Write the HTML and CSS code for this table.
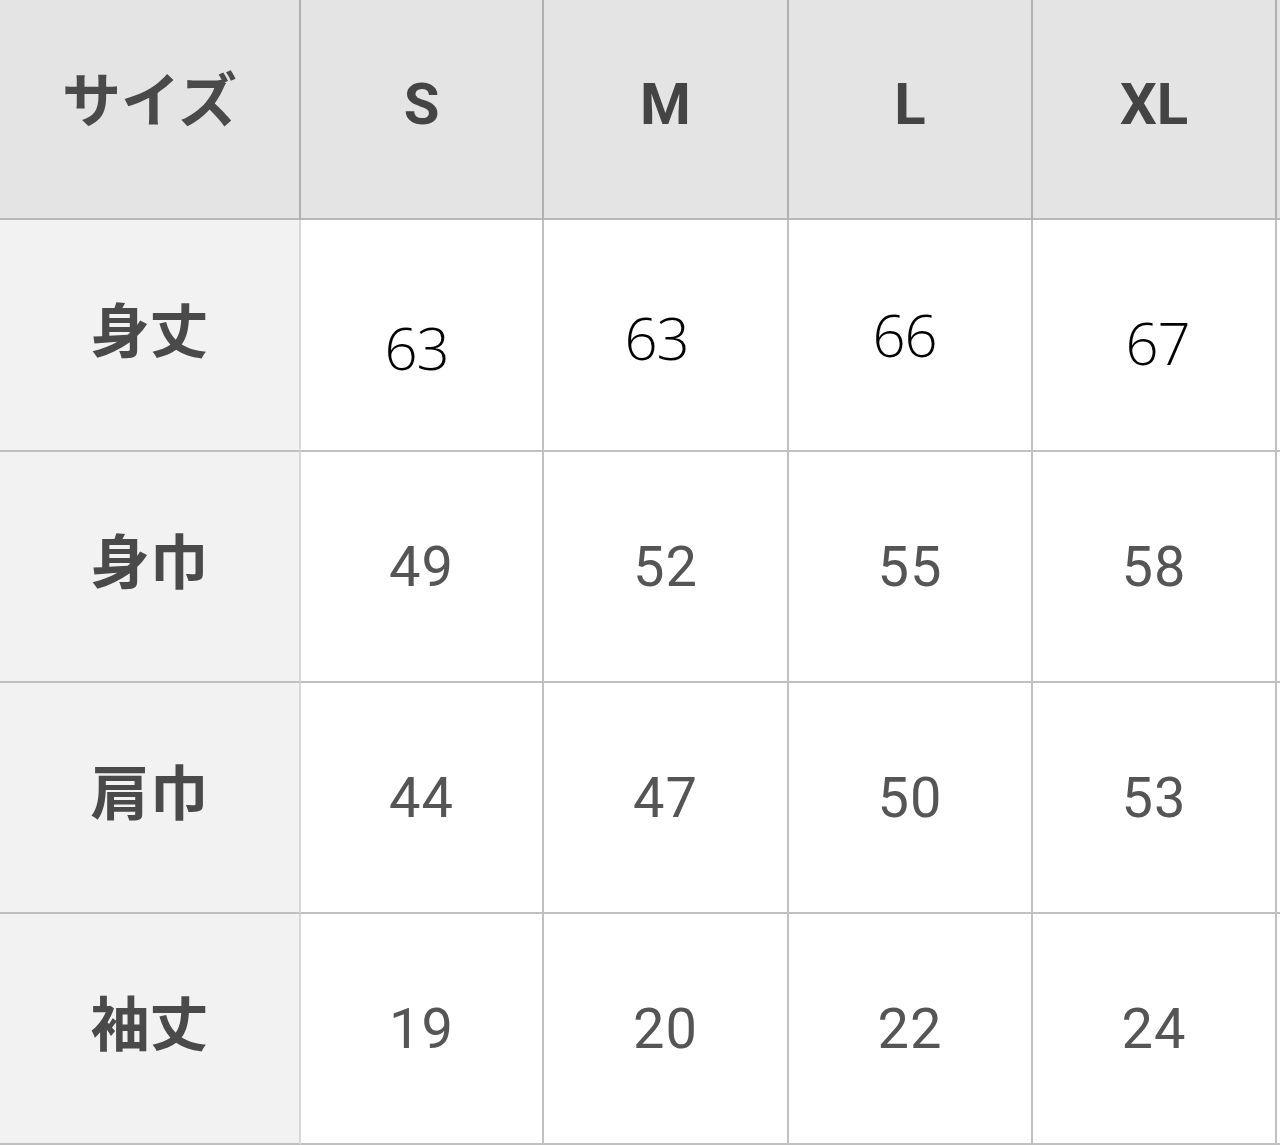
FILE: index.html
```html
<!DOCTYPE html>
<html lang="ja">
<head>
<meta charset="utf-8">
<title>サイズ表</title>
<link rel="stylesheet" href="styles.css">
</head>
<body>
<div class="chart">
  <div class="cell head label"><span class="jp hlab">サイズ</span></div>
  <div class="cell head"><span class="size">S</span></div>
  <div class="cell head"><span class="size">M</span></div>
  <div class="cell head"><span class="size">L</span></div>
  <div class="cell head"><span class="size">XL</span></div>
  <div class="cell head edge"></div>

  <div class="cell label"><span class="jp lab">身丈</span></div>
  <div class="cell"><span class="alt a1">63</span></div>
  <div class="cell"><span class="alt a2">63</span></div>
  <div class="cell"><span class="alt a3">66</span></div>
  <div class="cell"><span class="alt a4">67</span></div>
  <div class="cell edge"></div>

  <div class="cell label"><span class="jp lab">身巾</span></div>
  <div class="cell"><span class="num">49</span></div>
  <div class="cell"><span class="num">52</span></div>
  <div class="cell"><span class="num">55</span></div>
  <div class="cell"><span class="num">58</span></div>
  <div class="cell edge"></div>

  <div class="cell label"><span class="jp lab">肩巾</span></div>
  <div class="cell"><span class="num">44</span></div>
  <div class="cell"><span class="num">47</span></div>
  <div class="cell"><span class="num">50</span></div>
  <div class="cell"><span class="num">53</span></div>
  <div class="cell edge"></div>

  <div class="cell label"><span class="jp lab">袖丈</span></div>
  <div class="cell"><span class="num">19</span></div>
  <div class="cell"><span class="num">20</span></div>
  <div class="cell"><span class="num">22</span></div>
  <div class="cell"><span class="num">24</span></div>
  <div class="cell edge"></div>
</div>
</body>
</html>
```

FILE: styles.css
```css
html, body {
  margin: 0;
  padding: 0;
  background: #ffffff;
}

.chart {
  display: grid;
  grid-template-columns: 301px 243px 245px 244px 244px 3px;
  grid-template-rows: 220px 232px 231px 231px 231px;
  width: 1280px;
}

.cell {
  box-sizing: border-box;
  display: flex;
  align-items: center;
  justify-content: center;
  background: #ffffff;
  border-right: 2px solid #c0c0c0;
  border-bottom: 2px solid #c0c0c0;
}

.cell.label {
  background: #f2f2f2;
  border-right-color: #d8d8d8;
}

.cell.head {
  background: #e4e4e4;
  padding-bottom: 10px;
  border-right-color: #b0b0b0;
  border-bottom-color: #b8b8b8;
}

.cell.edge {
  border-right: none;
}

.jp {
  font-family: "Noto Sans CJK JP", "Noto Sans", sans-serif;
  font-weight: 700;
  font-size: 59px;
  color: #4a4a4a;
}

.hlab {
  padding-bottom: 16px;
}

.lab {
  padding-bottom: 16px;
}

.size {
  font-family: Roboto, "Liberation Sans", sans-serif;
  font-weight: 700;
  font-size: 58px;
  color: #444444;
}

.num {
  font-family: Roboto, "Liberation Sans", sans-serif;
  font-weight: 400;
  font-size: 56px;
  color: #555555;
  letter-spacing: 1px;
}

.alt {
  font-family: "Open Sans", "Liberation Sans", sans-serif;
  font-weight: 300;
  font-size: 58px;
  color: #000000;
  letter-spacing: -1px;
}

.a1 { margin: 24px 10px 0 0; }
.a2 { margin: 5px 18px 0 0; }
.a3 { margin: 0 11px 2px 0; }
.a4 { margin: 15px 0 0 7px; }
```
